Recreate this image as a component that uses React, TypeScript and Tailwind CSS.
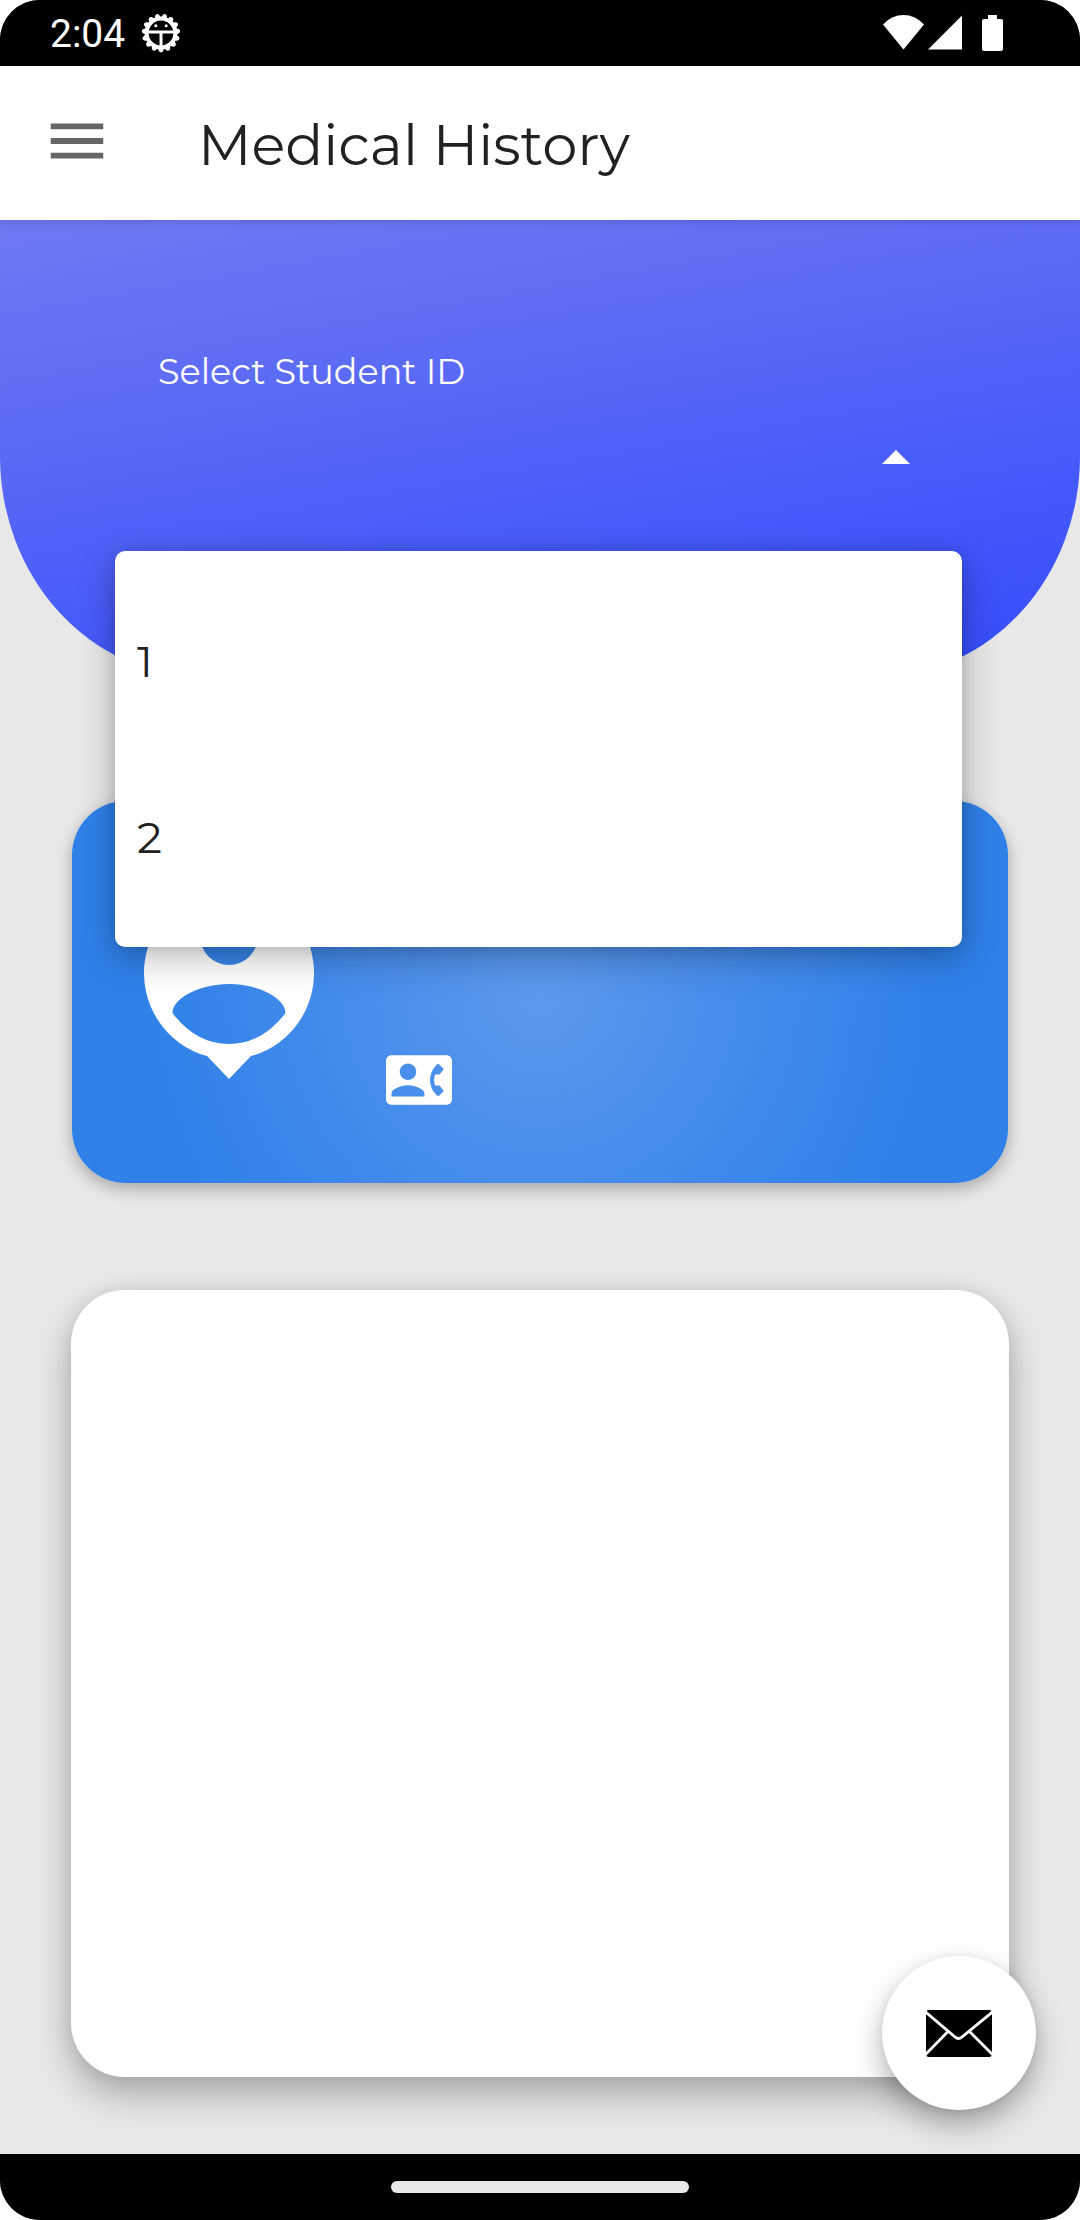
import React from "react";
import { MdContactPhone, MdMenu } from "react-icons/md";

const studentIds = ["1", "2"];

function GearIcon() {
  const teeth = Array.from({ length: 15 }, (_, i) => 12 + i * 24);
  return (
    <svg viewBox="0 0 40 40" className="h-10 w-10" aria-hidden="true">
      {teeth.map((angle) => (
        <path key={angle} d="M16.5 5 18.2 1.600Q20 -.2 21.8 1.600L23.5 5Z" fill="#fff" transform={`rotate(${angle} 20 20)`} />
      ))}
      <circle cx="20" cy="20" r="14.300" fill="#000" stroke="#fff" strokeWidth="3.800" />
      <path d="M6 19H34M20 19V35" fill="none" stroke="#fff" strokeWidth="3" />
      <circle cx="14.800" cy="12.800" r="1.500" fill="#fff" />
      <circle cx="25.200" cy="12.800" r="1.500" fill="#fff" />
    </svg>
  );
}

function StatusBar() {
  return (
    <div className="flex h-[66px] items-center justify-between bg-black pl-[50px] pr-[76px] text-white">
      <div className="flex items-center gap-4">
        <span className="pt-0.5 font-[Roboto,sans-serif] text-[39px] leading-[48px]">2:04</span>
        <GearIcon />
      </div>
      <svg viewBox="0 0 121 36" className="h-9 w-[121px]" fill="#fff" aria-hidden="true">
        <path d="M0 9.500Q8.500 0 20.500 0T41 9.500L20.500 34.500Z" />
        <path d="M79 .5V34.500H45Z" />
        <path d="M105 0h9v4h4a2 2 0 0 1 2 2v28a2 2 0 0 1-2 2h-17a2 2 0 0 1-2-2V6a2 2 0 0 1 2-2h4z" />
      </svg>
    </div>
  );
}

function PersonPin() {
  return (
    <svg viewBox="0 0 170 192" className="h-48 w-[170px]" aria-hidden="true">
      <path
        fill="#fff"
        fillRule="evenodd"
        d="M85 0A85 86 0 0 1 107 169.070L85 192 63 169.070A85 86 0 0 1 85 0ZM85 20a29 29 0 1 0 0 58 29 29 0 0 0 0-58ZM28.500 126Q52 157 85 157T141.500 126C141.500 111 114 97 85 97S28.500 111 28.500 126Z"
      />
    </svg>
  );
}

function Envelope() {
  return (
    <svg viewBox="0 0 66 47" className="h-[47px] w-[66px]" aria-hidden="true">
      <rect width="66" height="47" rx="3" fill="#000" />
      <path d="M-1 1.500 29 27Q32.500 30 36 27L67 1.500M22 21.500-1 45M43.500 21.500 67 45" fill="none" stroke="#fff" strokeWidth="2.800" />
    </svg>
  );
}

function StudentSelect() {
  return (
    <div className="pt-[130px]">
      <label id="student-label" htmlFor="student" className="ml-[158px] block text-[35px] leading-[44px] text-white">
        Select Student ID
      </label>
      <div className="relative z-10 ml-[115px] mr-[118px]">
        <button
          id="student"
          type="button"
          aria-haspopup="listbox"
          aria-expanded="true"
          aria-labelledby="student-label"
          className="flex h-[157px] w-full items-start justify-end pr-[52px] pt-14"
        >
          <svg viewBox="0 0 28 14" className="h-[14px] w-7" fill="#fff" aria-hidden="true">
            <path d="M0 14 14 0 28 14Z" />
          </svg>
        </button>
        <ul
          role="listbox"
          aria-labelledby="student-label"
          className="absolute inset-x-0 top-full rounded-[10px] bg-white py-[22px] shadow-[0_10px_36px_rgba(0,0,0,0.28),0_0_14px_rgba(0,0,0,0.1)]"
        >
          {studentIds.map((id) => (
            <li key={id} role="option" aria-selected="false" className="flex h-44 items-center px-[22px] text-[44px] text-[#212121]">
              {id}
            </li>
          ))}
        </ul>
      </div>
    </div>
  );
}

export default function App() {
  return (
    <div className="flex min-h-screen flex-col overflow-hidden rounded-[40px] bg-black font-[Montserrat,Inter,sans-serif]">
      <StatusBar />
      <header className="relative z-10 flex h-[154px] items-start bg-white pl-[42px] pt-10 shadow-[0_2px_8px_rgba(0,0,0,0.15)]">
        <button type="button" aria-label="Open menu" className="text-[#666666]">
          <MdMenu size={70} />
        </button>
        <h1 className="ml-[86px] text-[56px] leading-[78px] text-[#212121]">Medical History</h1>
      </header>
      <main className="relative flex flex-1 flex-col bg-[#e8e8e8] pb-[77px]">
        <section className="h-[456px] rounded-b-[200px_220px] bg-[linear-gradient(170deg,#6f79f1_0%,#5969f6_38%,#455afa_68%,#344bfd_100%)]">
          <StudentSelect />
        </section>
        <section
          aria-label="Student"
          className="mx-[72px] mt-[125px] flex h-[382px] items-start rounded-[54px] bg-[radial-gradient(circle_at_center,#5b99ed_0px,#468dec_190px,#2f80e8_400px)] pl-[72px] pt-[86px] shadow-[0_6px_16px_rgba(0,0,0,0.28)]"
        >
          <PersonPin />
          <MdContactPhone size={66} color="#fff" className="ml-[72px] mt-40" />
        </section>
        <section
          aria-label="History"
          className="mx-[71px] mt-[107px] flex-1 rounded-[54px] bg-white shadow-[0_18px_36px_rgba(0,0,0,0.27),0_0_20px_rgba(0,0,0,0.08)]"
        />
        <button
          type="button"
          aria-label="Send message"
          className="absolute bottom-11 right-11 flex h-[154px] w-[154px] items-center justify-center rounded-full bg-white shadow-[0_14px_30px_rgba(0,0,0,0.3),0_0_8px_rgba(0,0,0,0.06)]"
        >
          <Envelope />
        </button>
      </main>
      <footer className="relative flex h-[66px] items-center justify-center bg-black">
        <div className="h-3 w-[298px] rounded-full bg-[#e8e8e8]" />
      </footer>
    </div>
  );
}
